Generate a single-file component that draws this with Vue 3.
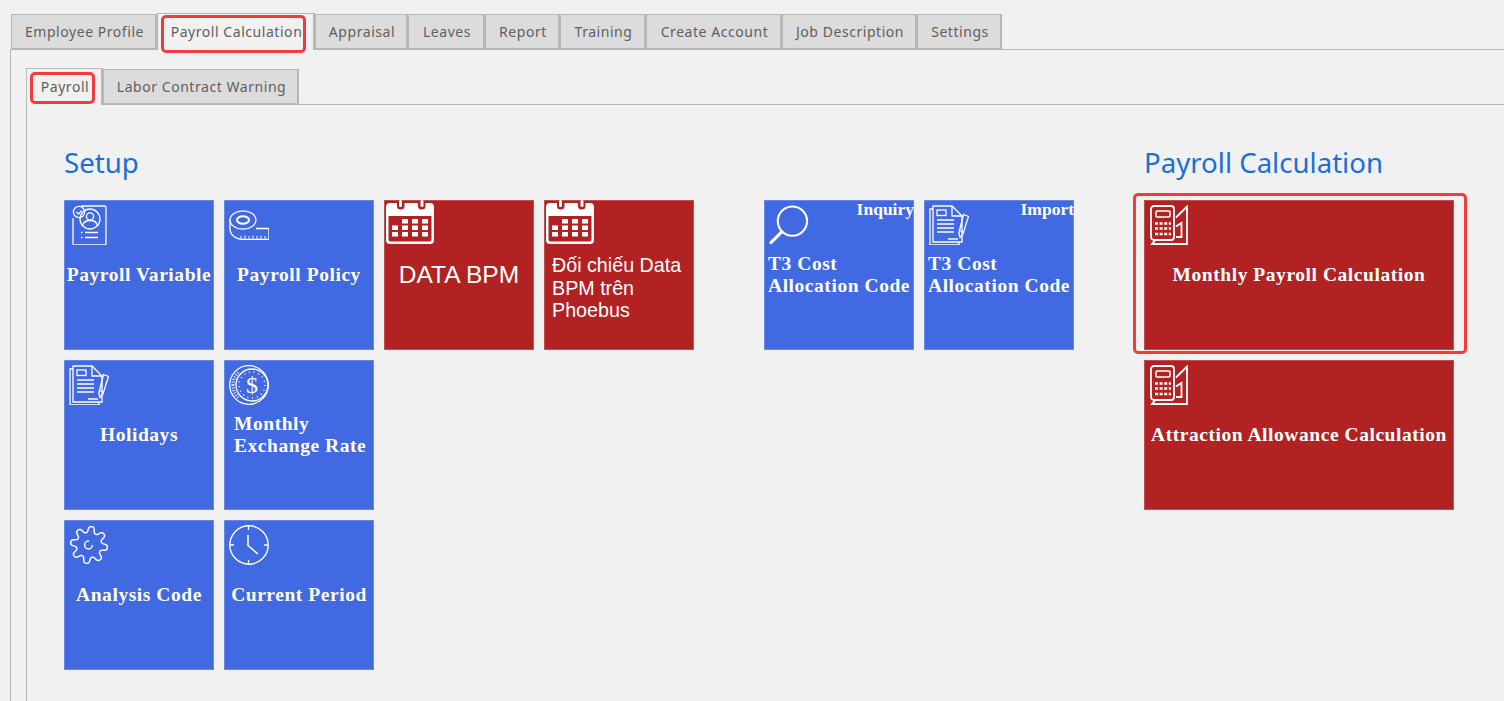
<template>
  <div class="screen">
    <!-- icon sprite -->
    <svg class="sprite" width="0" height="0">
      <defs>
        <symbol id="i-person" viewBox="0 0 40 40">
          <path d="M9 1H32.500a1.500 1.500 0 0 1 1.500 1.500V38.500a1.500 1.500 0 0 1-1.500 1.500H2.500A1.500 1.500 0 0 1 1 38.500V13" />
          <circle cx="7" cy="7" r="5.600" />
          <path d="M4.500 7l2 2 3.400-3.600" />
          <circle cx="18" cy="14" r="10" />
          <circle cx="18" cy="11.500" r="3.600" />
          <path d="M10.500 20.500c1-4 4-5 7.500-5s6.500 1 7.500 5" />
          <path d="M13 27.500H26M13 32.500H26M9 27.500h1.500M9 32.500h1.500" />
        </symbol>
        <symbol id="i-tape" viewBox="0 0 40 30">
          <ellipse cx="14" cy="10" rx="13" ry="9.200" />
          <ellipse cx="14" cy="10" rx="6" ry="3.800" stroke-width="2" />
          <path d="M1 10V19C1 25 7 29.300 14 29.300H40V18.500H27" />
          <path d="M12 29V26M16 29V25.500M20 29V26M24 29V25.500M28 29V26M32 29V25.500M36 29V26" stroke-width="0.900" />
        </symbol>
        <symbol id="i-calendar" viewBox="0 0 48 44">
          <path class="solid" fill-rule="evenodd" d="M4 3H11V6a3.500 3.500 0 0 0 3.500 3.500h.5A3.500 3.500 0 0 0 18.500 6V3H32V6a3.500 3.500 0 0 0 3.500 3.500h.5A3.500 3.500 0 0 0 39.500 6V3H44a4 4 0 0 1 4 4V40a4 4 0 0 1-4 4H4a4 4 0 0 1-4-4V7a4 4 0 0 1 4-4ZM2.500 16V39a2.500 2.500 0 0 0 2.500 2.500H43a2.500 2.500 0 0 0 2.500-2.500V16Z" />
          <rect class="solid" x="13" y="0" width="3" height="7" rx="1.500" />
          <rect class="solid" x="34.500" y="0" width="3" height="7" rx="1.500" />
          <path class="solid" d="M16 19h6v4.500h-6zM26 19h6v4.500h-6zM36 19h6v4.500h-6zM6 25.500h6V30H6zM16 25.500h6V30h-6zM26 25.500h6V30h-6zM36 25.500h6V30h-6zM6 32h6v4.500H6zM16 32h6v4.500h-6zM26 32h6v4.500h-6zM36 32h6v4.500h-6z" />
        </symbol>
        <symbol id="i-search" viewBox="0 0 41 40">
          <circle cx="24" cy="16" r="15" stroke-width="2.200" />
          <path d="M13 27L2 38" stroke-width="3.200" stroke-linecap="round" />
        </symbol>
        <symbol id="i-doc" viewBox="0 0 40 40">
          <path d="M4 1H23L33 11V37H4Z" />
          <path d="M23 1V11H33" />
          <path d="M4 4H1V40H30V37" />
          <rect x="8" y="5" width="9" height="5.500" />
          <path d="M8 15H25M8 19H25M8 23H25M8 27H25M19 34H29" />
          <path d="M34.500 9.500L39.500 11.500L34 29L31 32.500L29.800 28Z" />
          <path d="M30.500 25.500L35 27.500" />
        </symbol>
        <symbol id="i-coin" viewBox="0 0 40 40">
          <circle cx="20" cy="20" r="19.300" />
          <circle cx="23" cy="20" r="16" />
          <circle cx="23" cy="20" r="13" stroke-width="1.500" stroke-dasharray="1 3.800" />
          <path d="M4 20a16 16 0 0 1 6-13M4 20a16 16 0 0 0 6 13" stroke-width="3" stroke-dasharray="0.800 1.800" />
          <text x="23" y="28" text-anchor="middle" class="dollar">$</text>
        </symbol>
        <symbol id="i-gear" viewBox="0 0 41 40">
          <path :d="gearPath" stroke-width="1.500" />
          <circle cx="20" cy="20" r="4" stroke-width="1.500" stroke-dasharray="19 6.100" />
        </symbol>
        <symbol id="i-clock" viewBox="0 0 40 40">
          <circle cx="20" cy="20" r="19.200" stroke-width="1.400" />
          <path d="M19.500 1V5M19.500 35V39M1 20H5M35 20H39" />
          <path d="M19 10V20.500L29 29" stroke-width="1.600" />
        </symbol>
        <symbol id="i-calc" viewBox="0 0 38 40">
          <rect x="1" y="1" width="23" height="34" rx="3" stroke-width="1.800" />
          <rect x="6" y="6" width="14" height="6" rx="1" stroke-width="1.500" />
          <path d="M5 18.500H21M5 23.500H21M5 29H21" stroke-width="2.400" stroke-dasharray="3 1.600" />
          <path d="M26 12.500L37 1.500V39H2L5 35.500" stroke-width="1.800" />
          <path d="M26 21.500L31.500 18V32H26" stroke-width="1.800" />
        </symbol>
      </defs>
    </svg>

    <nav class="tabs">
      <div
        v-for="tab in mainTabs"
        :key="tab.name"
        class="tab"
        :class="{ active: tab.active }"
        :style="{ width: tab.w + 'px' }"
      >
        {{ tab.name }}
        <span v-if="tab.active" class="mark mark-main"></span>
      </div>
    </nav>

    <div class="panel">
      <nav class="subtabs">
        <div class="tab sub active">
          Payroll
          <span class="mark mark-sub"></span>
        </div>
        <div class="tab sub labor">Labor Contract Warning</div>
      </nav>

      <div class="subpanel">
        <section>
          <h2>Setup</h2>
          <div class="groups">
            <div v-for="(group, g) in setupGroups" :key="g" class="group">
              <div v-for="(row, r) in group" :key="r" class="row">
                <div
                  v-for="t in row"
                  :key="t.id"
                  class="tile"
                  :class="[t.color, t.align]"
                >
                  <svg class="icon" :class="t.iconClass"><use :href="'#i-' + t.icon" /></svg>
                  <span v-if="t.corner" class="corner">{{ t.corner }}</span>
                  <span class="label" :class="t.labelClass">
                    <template v-for="(line, i) in t.lines" :key="i">
                      <br v-if="i" />{{ line }}
                    </template>
                  </span>
                </div>
              </div>
            </div>
          </div>
        </section>

        <section class="calc-section">
          <h2>Payroll Calculation</h2>
          <div class="calc-tiles">
            <div class="tile red wide">
              <svg class="icon ic-calc"><use href="#i-calc" /></svg>
              <span class="label">Monthly Payroll Calculation</span>
              <span class="mark mark-tile"></span>
            </div>
            <div class="tile red wide">
              <svg class="icon ic-calc"><use href="#i-calc" /></svg>
              <span class="label">Attraction Allowance Calculation</span>
            </div>
          </div>
        </section>
      </div>
    </div>
  </div>
</template>

<script setup>
const mainTabs = [
  { name: 'Employee Profile', w: 146 },
  { name: 'Payroll Calculation', active: true, w: 158 },
  { name: 'Appraisal', w: 93 },
  { name: 'Leaves', w: 77 },
  { name: 'Report', w: 75 },
  { name: 'Training', w: 86 },
  { name: 'Create Account', w: 136 },
  { name: 'Job Description', w: 135 },
  { name: 'Settings', w: 85 }
]

const setupGroups = [
  [
    [
      { id: 'var', color: 'blue', icon: 'person', iconClass: 'ic-person', lines: ['Payroll Variable'] },
      { id: 'policy', color: 'blue', icon: 'tape', iconClass: 'ic-tape', lines: ['Payroll Policy'] },
      { id: 'bpm', color: 'red', icon: 'calendar', iconClass: 'ic-cal', labelClass: 'plain big', lines: ['DATA BPM'] },
      { id: 'bpm2', color: 'red', icon: 'calendar', iconClass: 'ic-cal', align: 'left pad7', labelClass: 'plain low', lines: ['Đối chiếu Data', 'BPM trên', 'Phoebus'] }
    ],
    [
      { id: 'holidays', color: 'blue', icon: 'doc', lines: ['Holidays'] },
      { id: 'rate', color: 'blue', icon: 'coin', align: 'left pad9', lines: ['Monthly', 'Exchange Rate'] }
    ],
    [
      { id: 'code', color: 'blue', icon: 'gear', lines: ['Analysis Code'] },
      { id: 'period', color: 'blue', icon: 'clock', lines: ['Current Period'] }
    ]
  ],
  [
    [
      { id: 'inq', color: 'blue', icon: 'search', corner: 'Inquiry', align: 'left pad4', lines: ['T3 Cost', 'Allocation Code'] },
      { id: 'imp', color: 'blue', icon: 'doc', corner: 'Import', align: 'left pad4', lines: ['T3 Cost', 'Allocation Code'] }
    ]
  ]
]

// wavy outline for the gear, 8 rounded teeth
const gearPath = (() => {
  const pts = []
  for (let i = 0; i < 320; i++) {
    const a = (i / 320) * Math.PI * 2
    const c = Math.tanh(1.6 * Math.cos(8 * a - Math.PI / 2 + 0.4)) / Math.tanh(1.6)
    const r = 16 + 3 * c
    pts.push((20.5 + r * Math.cos(a)).toFixed(2) + ' ' + (20 + r * Math.sin(a)).toFixed(2))
  }
  return 'M' + pts.join('L') + 'Z'
})()
</script>

<style scoped>
.screen {
  position: relative;
  width: 1504px;
  height: 701px;
  overflow: hidden;
  box-sizing: border-box;
  padding: 13px 0 0 10px;
  background: #f1f1f1;
  font-family: "Noto Sans", sans-serif;
}
.sprite {
  position: absolute;
}
.sprite symbol {
  fill: none;
  stroke: #fff;
  stroke-width: 1.300;
}
.sprite .solid {
  fill: #fff;
  stroke: none;
}
.sprite .dollar {
  fill: #fff;
  stroke: none;
  font-family: "Liberation Serif", serif;
  font-size: 24px;
}

.tabs {
  display: flex;
  align-items: flex-end;
  height: 36px;
  padding-left: 1px;
}
.subtabs {
  display: flex;
  align-items: flex-end;
  height: 36px;
}
.tab {
  position: relative;
  box-sizing: border-box;
  height: 35px;
  padding-left: 2px;
  display: flex;
  align-items: center;
  justify-content: center;
  background: #dcdcdc;
  border: 1px solid #b7b7b7;
  border-right-width: 2px;
  color: #606060;
  font-size: 14px;
  letter-spacing: 0.550px;
  white-space: nowrap;
}
.tab.active {
  height: 37px;
  margin-bottom: -1px;
  padding-bottom: 2px;
  background: #f1f1f1;
  border-bottom: 0;
  z-index: 1;
}
.tab.sub.active {
  width: 77px;
}
.tab.labor {
  width: 196px;
}

.panel {
  box-sizing: border-box;
  height: 652px;
  border-top: 1px solid #b7b7b7;
  border-left: 1px solid #b7b7b7;
  padding: 18px 0 0 15px;
}
.subpanel {
  display: flex;
  gap: 70px;
  box-sizing: border-box;
  height: 600px;
  border-top: 1px solid #b7b7b7;
  border-left: 1px solid #b7b7b7;
  padding: 37px 0 0 37px;
}
h2 {
  margin: 0 0 18px;
  height: 40px;
  line-height: 40px;
  font-size: 27.600px;
  font-weight: 400;
  color: #1b6fd6;
}

.groups {
  display: flex;
  gap: 70px;
}
.group {
  display: flex;
  flex-direction: column;
  gap: 10px;
}
.row {
  display: flex;
  gap: 10px;
}
.calc-tiles {
  display: flex;
  flex-direction: column;
  gap: 10px;
}

.tile {
  position: relative;
  box-sizing: border-box;
  width: 150px;
  height: 150px;
  display: flex;
  align-items: center;
  justify-content: center;
  border: 1px solid rgba(255, 255, 255, 0.2);
  color: #fff;
}
.tile.wide {
  width: 310px;
}
.tile.blue {
  background: #4169e1;
}
.tile.red {
  background: #b22222;
}
.tile.left {
  justify-content: flex-start;
}
.tile.pad4 {
  padding-left: 3px;
}
.tile.pad7 {
  padding-left: 7px;
}
.tile.pad9 {
  padding-left: 9px;
}

.icon {
  position: absolute;
  left: 4px;
  top: 4px;
  width: 40px;
  height: 40px;
}
.icon.ic-person {
  left: 7px;
}
.icon.ic-tape {
  top: 9px;
  height: 30px;
}
.icon.ic-cal {
  left: 1px;
  top: -1px;
  width: 48px;
  height: 44px;
}
.icon.ic-calc {
  left: 5px;
  width: 38px;
}

.label {
  font-family: "Liberation Serif", serif;
  font-weight: 700;
  font-size: 19.500px;
  line-height: 22px;
  letter-spacing: 0.550px;
  white-space: nowrap;
}
.label.plain {
  font-family: "Liberation Sans", sans-serif;
  font-weight: 400;
  font-size: 19.700px;
  line-height: 22.500px;
  letter-spacing: 0;
}
.label.big {
  font-size: 24.500px;
  line-height: 26px;
}
.label.low {
  margin-top: 26px;
}
.corner {
  position: absolute;
  top: -1px;
  right: -1px;
  font-family: "Liberation Serif", serif;
  font-weight: 700;
  font-size: 17.500px;
  line-height: 18px;
}

/* red annotation frames on top of the screenshot */
.mark {
  position: absolute;
  border: 3px solid #f23c3c;
  border-radius: 5px;
  pointer-events: none;
  z-index: 2;
}
.mark-main {
  left: 3px;
  right: 7px;
  top: 1px;
  bottom: -3px;
}
.mark-sub {
  left: 3px;
  right: 6px;
  top: 3px;
  bottom: 1px;
}
.mark-tile {
  left: -12px;
  right: -14px;
  top: -8px;
  bottom: -5px;
}
</style>

<style>
html, body {
  background: #f1f1f1;
}
</style>
